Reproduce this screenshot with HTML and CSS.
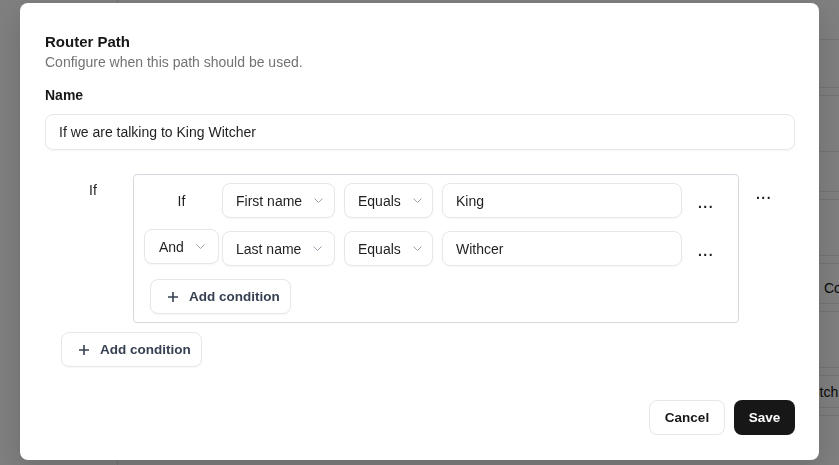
FILE: index.html
```html
<!DOCTYPE html>
<html lang="en">
  <head>
    <meta charset="UTF-8" />
    <meta name="viewport" content="width=device-width, initial-scale=1.0" />
    <title>Router Path</title>
    <link rel="stylesheet" href="styles.css">
  </head>
  <body>
    <!-- page behind the dialog -->
    <div class="app">
      <div class="sidebar"></div>
      <div class="main">
        <div class="topbar"></div>
        <div class="bg-row md"></div>
        <div class="bg-gap"></div>
        <div class="bg-row lg"></div>
        <div class="bg-row sm"></div>
        <div class="bg-gap"></div>
        <div class="bg-row lg"></div>
        <div class="bg-gap"></div>
        <div class="bg-row sm text-row contact">Contacts</div>
        <div class="bg-gap"></div>
        <div class="bg-row lg"></div>
        <div class="bg-gap"></div>
        <div class="bg-row xs text-row switch">Switch</div>
        <div class="bg-gap"></div>
      </div>
    </div>

    <div class="overlay"></div>

    <div class="dialog">
      <div class="dialog-title">Router Path</div>
      <div class="dialog-desc">Configure when this path should be used.</div>

      <div class="field-label">Name</div>
      <div class="text-input">If we are talking to King Witcher</div>

      <!-- conditions -->
      <div class="rule">
        <div class="rule-label">If</div>

        <div class="group">
          <div class="cond-row">
            <div class="lead">If</div>
            <div class="select sel-field">
              <span>First name</span>
              <svg viewBox="0 0 9 5"><path d="M0.5 0.5l4 4 4-4" /></svg>
            </div>
            <div class="select sel-op">
              <span>Equals</span>
              <svg viewBox="0 0 9 5"><path d="M0.5 0.5l4 4 4-4" /></svg>
            </div>
            <div class="value">King</div>
            <div class="more">...</div>
          </div>

          <div class="cond-row">
            <div class="select sel-join">
              <span>And</span>
              <svg viewBox="0 0 9 5"><path d="M0.5 0.5l4 4 4-4" /></svg>
            </div>
            <div class="select sel-field">
              <span>Last name</span>
              <svg viewBox="0 0 9 5"><path d="M0.5 0.5l4 4 4-4" /></svg>
            </div>
            <div class="select sel-op">
              <span>Equals</span>
              <svg viewBox="0 0 9 5"><path d="M0.5 0.5l4 4 4-4" /></svg>
            </div>
            <div class="value">Withcer</div>
            <div class="more">...</div>
          </div>

          <div class="btn-add inner">
            <svg viewBox="0 0 12 12"><path d="M6 1v10M1 6h10" /></svg>
            <span>Add condition</span>
          </div>
        </div>

        <div class="rule-more">...</div>
      </div>

      <div class="btn-add outer">
        <svg viewBox="0 0 12 12"><path d="M6 1v10M1 6h10" /></svg>
        <span>Add condition</span>
      </div>

      <div class="footer">
        <div class="btn btn-cancel">Cancel</div>
        <div class="btn btn-save">Save</div>
      </div>
    </div>
  </body>
</html>
```

FILE: styles.css
```css
* {
  margin: 0;
  padding: 0;
  box-sizing: border-box;
}

body {
  font-family: "Liberation Sans", Arial, sans-serif;
  font-size: 14px;
  color: #1f1f1f;
  background-color: #fff;
  overflow: hidden;
}

/* background page */
.app {
  display: flex;
  height: 465px;
}

.sidebar {
  flex-shrink: 0;
  width: 118px;
  border-right: 1px solid #e5e7eb;
}

.main {
  flex: 1;
  min-width: 0;
  overflow: hidden;
}

.topbar {
  height: 40px;
  border-bottom: 1px solid #e5e7eb;
}

.bg-row,
.bg-gap {
  border-bottom: 1px solid #e5e7eb;
}

.bg-gap { height: 8px; }
.bg-row.xs { height: 32px; }
.bg-row.sm { height: 40px; }
.bg-row.md { height: 48px; }
.bg-row.lg { height: 56px; }

.text-row {
  display: flex;
  align-items: center;
  color: #111;
  white-space: nowrap;
}

.contact {
  padding: 9px 0 0 706px;
}

.switch {
  padding-left: 679px;
}

.overlay {
  position: fixed;
  inset: 0;
  background-color: rgba(0, 0, 0, 0.5);
}

/* dialog */
.dialog {
  position: fixed;
  top: 3px;
  left: 20px;
  width: 799px;
  padding: 29px 24px 25px 25px;
  background-color: #fff;
  border-radius: 8px;
  box-shadow: 0 10px 30px rgba(0, 0, 0, 0.15);
}

.dialog-title {
  font-size: 15px;
  line-height: 20px;
  font-weight: bold;
  color: #171717;
}

.dialog-desc {
  line-height: 20px;
  color: #737373;
}

.field-label {
  margin-top: 13px;
  line-height: 20px;
  font-weight: bold;
  color: #171717;
}

.text-input {
  margin-top: 9px;
  height: 36px;
  padding: 0 13px;
  display: flex;
  align-items: center;
  border: 1px solid #e5e7eb;
  border-radius: 8px;
  box-shadow: 0 1px 2px rgba(0, 0, 0, 0.04);
}

.rule {
  margin-top: 24px;
  display: flex;
  align-items: flex-start;
  padding: 0 8px 0 16px;
}

.rule-label {
  width: 64px;
  margin-right: 8px;
  padding-top: 6px;
  line-height: 20px;
  text-align: center;
}

.group {
  flex: 1;
  padding: 8px 10px 8px 10px;
  border: 1px solid #d4d8de;
  border-radius: 4px;
  display: flex;
  flex-direction: column;
  align-items: flex-start;
  gap: 13px;
}

.rule-more {
  width: 48px;
  padding: 10px 0 0 2px;
  line-height: 20px;
  text-align: center;
  font-weight: bold;
  letter-spacing: 1.5px;
}

.cond-row {
  display: flex;
  align-items: center;
  align-self: stretch;
}

.lead {
  width: 75px;
  margin-right: 3px;
  text-align: center;
}

.select {
  display: flex;
  align-items: center;
  gap: 12px;
  height: 35px;
  padding: 0 16px 0 13px;
  border: 1px solid #e5e7eb;
  border-radius: 8px;
  background-color: #fff;
  white-space: nowrap;
  box-shadow: 0 1px 2px rgba(0, 0, 0, 0.04);
}

.select svg {
  width: 9px;
  height: 5px;
  flex-shrink: 0;
  fill: none;
  stroke: #9ca3af;
  stroke-width: 1;
}

.sel-join {
  width: 75px;
  margin: -2px 3px 2px 0;
  padding-left: 14px;
}

.sel-field {
  width: 113px;
}

.sel-op {
  width: 89px;
  margin-left: 9px;
}

.value {
  flex: 1;
  margin-left: 9px;
  height: 35px;
  padding: 0 13px;
  display: flex;
  align-items: center;
  border: 1px solid #e5e7eb;
  border-radius: 8px;
  box-shadow: 0 1px 2px rgba(0, 0, 0, 0.04);
}

.more {
  width: 46px;
  padding: 6px 0 0 2px;
  line-height: 29px;
  text-align: center;
  font-weight: bold;
  letter-spacing: 1.5px;
}

.btn-add {
  display: flex;
  align-items: center;
  gap: 10px;
  width: 141px;
  height: 35px;
  padding-left: 16px;
  border: 1px solid #e5e7eb;
  border-radius: 8px;
  background-color: #fff;
  font-size: 13.5px;
  font-weight: bold;
  color: #374151;
  white-space: nowrap;
  box-shadow: 0 1px 2px rgba(0, 0, 0, 0.04);
}

.btn-add svg {
  width: 12px;
  height: 12px;
  fill: none;
  stroke: #374151;
  stroke-width: 1.6;
}

.btn-add.inner {
  margin-left: 6px;
}

.btn-add.outer {
  margin: 9px 0 0 16px;
}

.footer {
  margin-top: 33px;
  display: flex;
  justify-content: flex-end;
  gap: 9px;
}

.btn {
  height: 35px;
  display: flex;
  align-items: center;
  justify-content: center;
  border-radius: 8px;
  font-size: 13.5px;
  font-weight: bold;
}

.btn-cancel {
  width: 76px;
  border: 1px solid #e5e7eb;
  color: #171717;
}

.btn-save {
  width: 61px;
  background-color: #171717;
  color: #fff;
}
```
